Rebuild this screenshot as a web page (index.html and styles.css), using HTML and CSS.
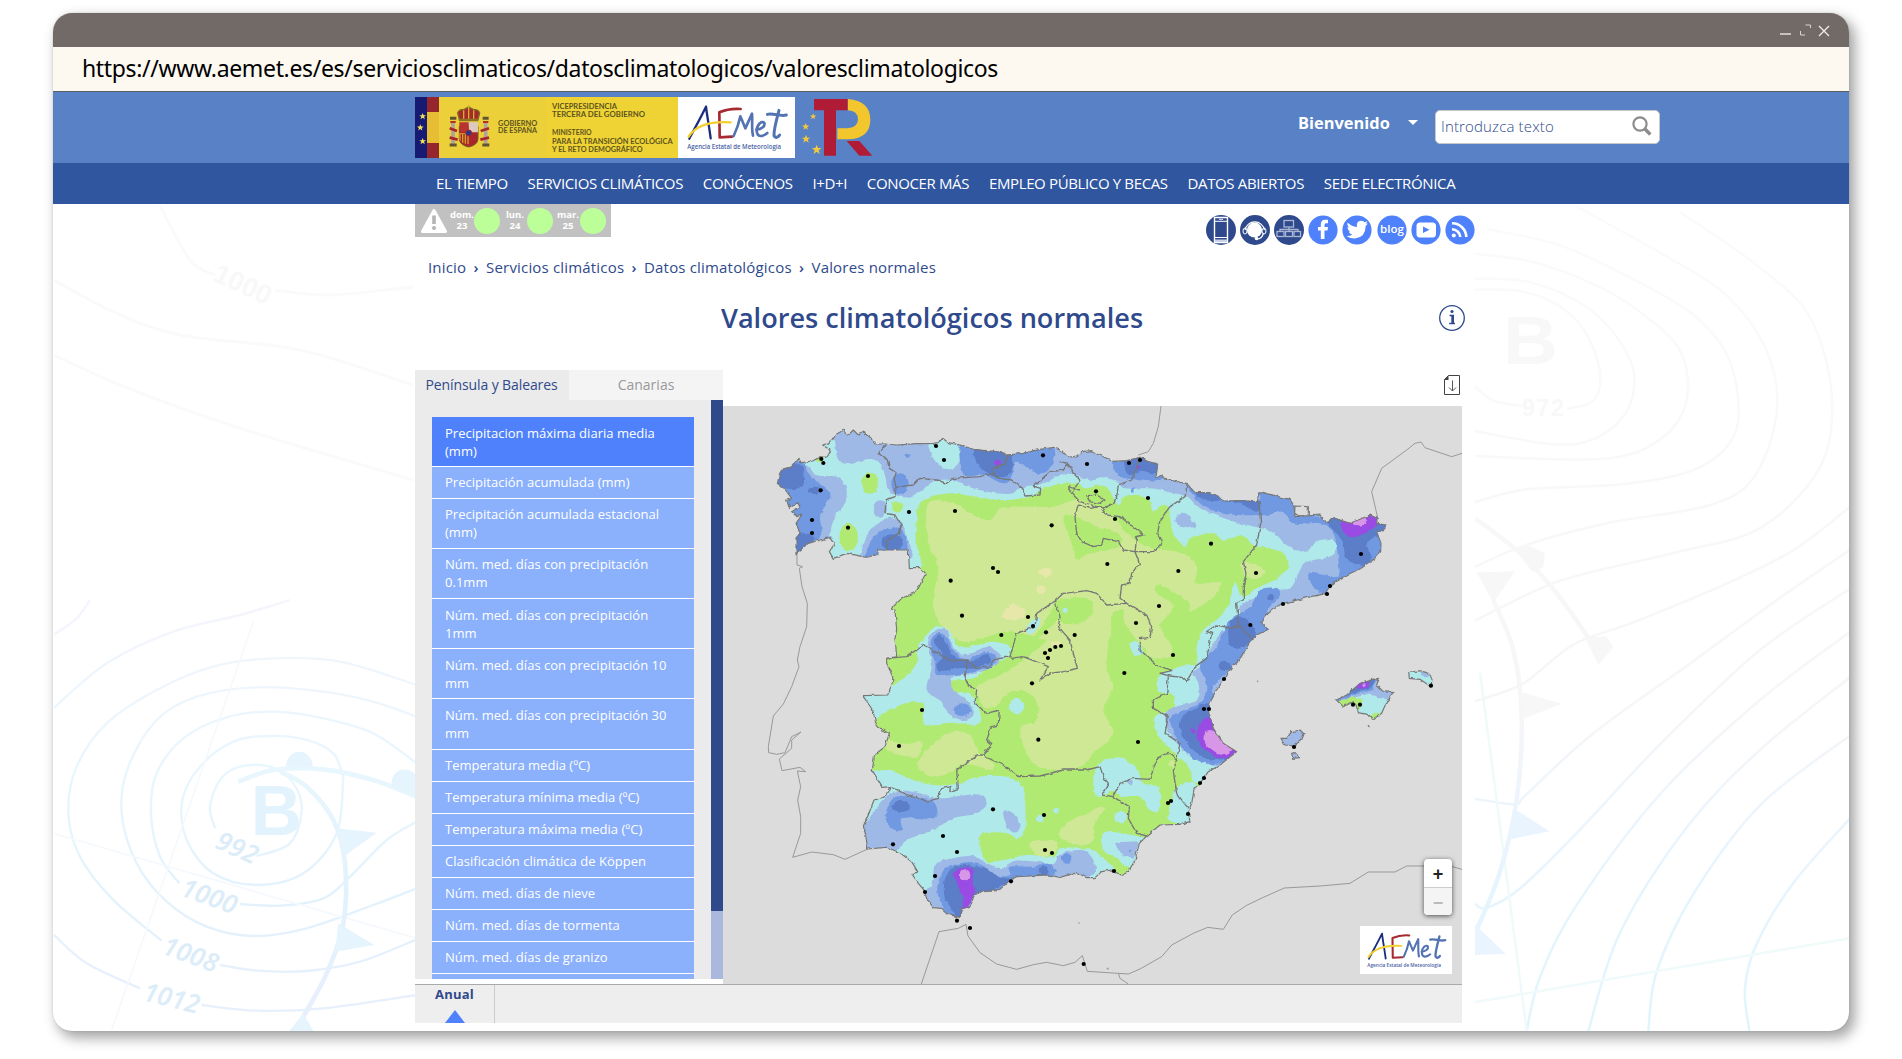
FILE: index.html
```html
<!DOCTYPE html>
<html lang="es">
<head>
<meta charset="utf-8">
<title>Valores climatológicos normales</title>
<link rel="stylesheet" href="styles.css">
</head>
<body>
<svg class="defs" width="0" height="0" aria-hidden="true">
  <symbol id="aemet" viewBox="0 0 351 183">
    <rect width="351" height="183" fill="#fff"/>
    <g fill="none" stroke-linecap="round" stroke-linejoin="round">
      <path d="M34 125C48 98 68 62 84 29C88 62 94 92 98 124" stroke="#1d2d7d" stroke-width="7"/>
      <path d="M124 46L125 120M124 46C145 37 165 34 188 36M125 121L162 119" stroke="#a62a31" stroke-width="8"/>
      <path d="M32 119C50 90 90 72 158 76" stroke="#f2cf2c" stroke-width="7"/>
      <path d="M167 117C176 98 183 78 187 58L202 94L222 50C224 75 220 95 225 116" stroke="#5473b2" stroke-width="8"/>
      <path d="M235 98C250 97 262 88 259 78C252 69 236 83 236 101C237 122 254 120 268 108" stroke="#5473b2" stroke-width="8"/>
      <path d="M303 40C296 66 287 98 288 116C292 126 302 119 305 114M268 52C285 46 305 60 325 54" stroke="#5473b2" stroke-width="9"/>
    </g>
    <text x="28" y="157" class="aemet-text" textLength="281" lengthAdjust="spacingAndGlyphs">Agencia Estatal de Meteorología</text>
  </symbol>
  <symbol id="star" viewBox="-12 -12 24 24"><path d="M0-11L3-3.500L11-3.500L4.500 1.500L7 9.500L0 4.500L-7 9.500L-4.500 1.500L-11-3.500L-3-3.500Z"/></symbol>
</svg>

<div class="window">
  <div class="titlebar">
    <svg width="52" height="16" viewBox="0 0 52 16" fill="none">
      <path d="M1 12H12" stroke="#c6c1be" stroke-width="2"/>
      <path d="M26.500 3H31.500V6M21.500 9V13H26" stroke="#d8d4d2"/>
      <path d="M40 4L50 14M50 4L40 14" stroke="#efedec" stroke-width="1.300"/>
    </svg>
  </div>
  <div class="urlbar"><span>https://www.aemet.es/es/serviciosclimaticos/datosclimatologicos/valoresclimatologicos</span></div>

  <header class="header">
    <svg class="gov" width="263" height="61" viewBox="0 0 789 183">
      <rect width="789" height="183" fill="#efd334"/>
      <rect x="72" width="324" height="183" fill="#ebd03a"/>
      <rect width="36" height="183" fill="#171a73"/>
      <rect x="36" width="36" height="183" fill="#96262d"/>
      <rect x="36" y="45" width="36" height="93" fill="#e6bd33"/>
      <g fill="#f5e05c"><use href="#star" x="12" y="47" width="22" height="22"/><use href="#star" x="5" y="81" width="22" height="22"/><use href="#star" x="12" y="122" width="22" height="22"/></g>
      <g>
        <path d="M133 88H189V126Q188 144 161 150Q134 144 133 126Z" fill="#a8262c" stroke="#735a20" stroke-width="3"/>
        <path d="M161 76H189V106H161Z" fill="#ddc9bd"/><path d="M133 76H161V106H133Z" fill="#b8332f"/>
        <path d="M133 108H161V142Q138 140 133 126Z" fill="#d79b2b"/><path d="M139 110V136M147 110V141M155 110V144" stroke="#a8262c" stroke-width="4"/>
        <circle cx="161" cy="108" r="9" fill="#253a86" stroke="#a8262c" stroke-width="3"/>
        <path d="M133 68L128 48Q132 36 146 38L161 30L176 38Q190 36 194 48L189 68Z" fill="#a52a2a" stroke="#806c25" stroke-width="4"/>
        <path d="M161 24V68M146 40V68M176 40V68" stroke="#d4ad2c" stroke-width="4"/>
        <path d="M132 69H190" stroke="#8c7324" stroke-width="8"/>
        <path d="M114 75V140M212 75V140" stroke="#afa49b" stroke-width="11"/>
        <path d="M105 64H124M203 64H221M104 144H125M202 144H223" stroke="#5f5533" stroke-width="9"/>
        <path d="M104 94L126 102M104 122L128 128M222 94L197 102M222 122L196 128" stroke="#a8262c" stroke-width="8"/>
        <path d="M106 75H122M204 75H220" stroke="#b0302c" stroke-width="6"/>
      </g>
      <g class="gov-text">
        <text x="249" y="86" textLength="118" lengthAdjust="spacingAndGlyphs">GOBIERNO</text>
        <text x="249" y="108" textLength="117" lengthAdjust="spacingAndGlyphs">DE ESPAÑA</text>
        <text x="411" y="35" textLength="195" lengthAdjust="spacingAndGlyphs">VICEPRESIDENCIA</text>
        <text x="411" y="60" textLength="279" lengthAdjust="spacingAndGlyphs">TERCERA DEL GOBIERNO</text>
        <text x="411" y="115" textLength="119" lengthAdjust="spacingAndGlyphs">MINISTERIO</text>
        <text x="411" y="141" textLength="362" lengthAdjust="spacingAndGlyphs">PARA LA TRANSICIÓN ECOLÓGICA</text>
        <text x="411" y="166" textLength="272" lengthAdjust="spacingAndGlyphs">Y EL RETO DEMOGRÁFICO</text>
      </g>
    </svg>
    <svg class="aemet-logo" width="117" height="61"><use href="#aemet"/></svg>
    <svg class="tr-logo" width="80" height="61" viewBox="0 0 240 183">
      <path d="M155 6Q223 12 223 68Q223 125 155 127H124V94H152Q186 92 186 67Q186 42 155 40Z" fill="#f4c62d"/>
      <path d="M54 6H155V40H120V176H84V40H54Z" fill="#b01c36"/>
      <path d="M152 132H190L229 176H190Z" fill="#b01c36"/>
      <g fill="#f2c93a"><use href="#star" x="41" y="48" width="21" height="21"/><use href="#star" x="17" y="77" width="24" height="24"/><use href="#star" x="16" y="112" width="28" height="28"/><use href="#star" x="46" y="142" width="32" height="32"/></g>
    </svg>
    <div class="welcome">Bienvenido<i class="caret"></i></div>
    <div class="search"><span>Introduzca texto</span>
      <svg width="20" height="20" viewBox="0 0 20 20" fill="none" stroke="#8c8c8c"><circle cx="8" cy="8" r="6.600" stroke-width="2.200"/><path d="M12.500 12.500L18.300 18.500" stroke-width="3.400"/></svg>
    </div>
  </header>

  <nav class="nav">
    <a>EL TIEMPO</a><a>SERVICIOS CLIMÁTICOS</a><a>CONÓCENOS</a><a>I+D+I</a><a>CONOCER MÁS</a><a>EMPLEO PÚBLICO Y BECAS</a><a>DATOS ABIERTOS</a><a>SEDE ELECTRÓNICA</a>
  </nav>

  <div class="content">
    <svg class="isobars" viewBox="54 204 1795 827" fill="none">
      <defs><linearGradient id="fadeL" gradientUnits="userSpaceOnUse" x1="0" y1="0" x2="0" y2="1290"><stop offset="0" stop-color="#f5f5fc"/><stop offset=".4" stop-color="#e8f6fd"/><stop offset=".7" stop-color="#e2f2fc"/><stop offset="1" stop-color="#e9effc"/></linearGradient>
      <linearGradient id="fadeR" gradientUnits="userSpaceOnUse" x1="0" y1="0" x2="0" y2="1500"><stop offset="0" stop-color="#fbfbfb"/><stop offset=".62" stop-color="#f6f6f7"/><stop offset=".8" stop-color="#e8f4fe"/><stop offset="1" stop-color="#e0f5fb"/></linearGradient></defs>
      <g transform="translate(40 600) scale(.33333)" stroke="url(#fadeL)" stroke-width="7">
        <path data-open="40,105 110,55 150,0"/>
        <path data-open="40,325 200,190 400,95 600,45 750,0"/>
        <path data-open="365,1022 220,900 120,770 85,640 110,500 200,370 350,270 520,200 700,175 900,185 1130,255"/>
        <path data-open="1130,865 1000,915 800,985 640,1008 500,980 380,905 290,790 245,640 265,500 350,360 470,290 650,262 850,275 1000,305 1130,350"/>
        <path data-open="418,850 360,770 333,640 350,520 430,415 560,352 700,335 850,355 1000,400 1130,490"/>
        <path data-open="1130,665 1040,720 930,830 850,895 720,917 600,912"/>
        <path data-open="910,530 880,460 800,420 690,408 580,425 480,500 427,600 440,720 520,820 650,855 790,820 890,700 910,530"/>
        <path data-open="525,685 510,620 540,540 600,500 690,500 760,550 785,630 750,730 650,768"/>
        <path data-open="540,1095 650,1112 800,1113 960,1085 1130,1018"/>
        <path data-open="40,1003 140,1090 300,1165"/>
        <path data-open="485,1215 650,1232 850,1225 1130,1185"/>
        <path d="M640 65L215 1290M40 700L1130 1015" stroke="#f5f9fd" stroke-width="5"/>
        <path data-open="595,545 700,510 850,508 1000,540 1130,590" stroke-width="14"/>
        <path data-open="720,515 800,560 880,660 915,790 910,970 860,1120 790,1250" stroke-width="14"/>
        <path d="M738 500A40 45 0 0 1 818 500ZM1055 555A40 40 0 0 1 1130 530V590ZM890 685L1010 698L910 770ZM895 970L1003 1035L885 1055ZM790 1240L820 1293H748Z" fill="#e6f4fd" stroke="none"/>
        <g class="iso-label"><text transform="translate(522 742) rotate(24)">992</text><text transform="translate(418 885) rotate(20)">1000</text><text transform="translate(362 1060) rotate(20)">1008</text><text transform="translate(305 1200) rotate(14)">1012</text><text class="low" x="632" y="706">B</text></g>
      </g>
      <g transform="translate(1460 190) scale(.33333 .55432)" stroke="url(#fadeR)">
        <g class="thin">
        <path data-open="45,180 180,182 300,210 380,260 420,330 400,380 320,395"/><path data-open="45,355 100,380 185,390"/>
        <path data-open="45,160 200,165 350,200 450,250 520,325 500,400 400,450 270,458 45,435"/>
        <path data-open="45,115 220,130 400,170 540,220 660,290 680,380 600,450 430,485 45,480"/>
        <path data-open="80,70 300,100 500,155 700,225 810,310 830,430 720,500 500,530 200,540 45,563"/>
        <path data-open="350,30 620,120 800,190 920,290 950,400 880,520 740,570 450,600 200,640 45,680"/>
        <path data-open="660,40 900,140 1050,230 1115,370 1080,500 900,610 640,655 300,705 45,777"/>
        <path data-open="1168,573 1000,650 800,710 520,780 340,820 190,890 45,922"/>
        <path data-open="1168,650 950,740 700,850 400,980 200,1090 165,1108 45,1098"/>
        <path data-open="1168,720 900,830 600,1000 350,1160 180,1260 80,1295 45,1288"/>
        <path data-open="1168,798 900,920 600,1090 350,1290 240,1420 200,1517"/>
        <path data-open="1168,880 900,1010 680,1150 480,1340 385,1517"/>
        <path data-open="1168,985 900,1110 700,1270 590,1410 565,1517"/>
        <path data-open="1168,1135 1000,1250 890,1360 855,1440 868,1517"/>
        <path d="M45 1465L1168 1350M60 870L200 1517" stroke="#f1fafa"/>
        </g>
        <g class="thick"><path data-open="45,592 180,655 300,735 420,840"/><path data-open="100,740 160,830 185,950 170,1100 120,1230 50,1335"/></g>
        <path d="M165 650L200 640L255 655L250 680L220 690ZM375 808L440 805L460 825L415 857ZM50 690L165 688L100 745ZM180 905L305 927L188 955Z" fill="#f7f7f7" stroke="none"/>
        <path d="M160 1115L268 1157L145 1172ZM45 1325L137 1378L45 1380Z" fill="#eaf4fe" stroke="none"/>
      </g>
      <g class="faint-label"><text transform="translate(1503 364) scale(1.120 1)" font-size="68">B</text><text x="1522" y="416" font-size="23" textLength="42">972</text><text transform="translate(212 280) rotate(25)" font-size="27">1000</text></g>
      <g stroke="#fafafb" stroke-width="3"><path data-open="160,206 190,260 215,275"/><path data-open="275,290 330,295 413,287"/><path data-open="54,280 110,310 180,335 300,350 413,385"/><path data-open="54,355 120,385 230,425 413,480"/></g>
    </svg>

    <main class="page">
      <div class="top-row">
        <div class="alerts">
          <svg width="26" height="24" viewBox="0 0 26 24"><path d="M13 1.500L24.500 22.500H1.500Z" fill="#fff" stroke="#fff" stroke-width="3" stroke-linejoin="round"/><path d="M13 6.500V15" stroke="#b5b5b5" stroke-width="3.600"/><circle cx="13" cy="19" r="2" fill="#b5b5b5"/></svg>
          <span>dom.<br>23</span><i></i><span>lun.<br>24</span><i></i><span>mar.<br>25</span><i></i>
        </div>
        <div class="social">
          <svg viewBox="0 0 30 30"><circle cx="15" cy="15" r="15" fill="#2f4a8c"/><path d="M8.500 2.500H21.500V27.500H8.500Z" fill="#2f4a8c" stroke="#fff" stroke-width="1.400"/><path d="M9 6.300H21M9 22.500H21" stroke="#fff"/><path d="M9 24.500H21V27H9ZM13 3.800H17V5H13Z" fill="#c9d2e8"/></svg>
          <svg viewBox="0 0 30 30"><circle cx="15" cy="15" r="15" fill="#2f4a8c"/><circle cx="14.500" cy="15" r="7.600" fill="#fff"/><path d="M5 15A10 10.500 0 0 1 24.500 15M23.500 18Q22 24 17 24" fill="none" stroke="#fff" stroke-width="1.200"/><ellipse cx="5" cy="16" rx="2" ry="3" fill="none" stroke="#fff"/><ellipse cx="24" cy="16" rx="2" ry="3" fill="none" stroke="#fff"/><circle cx="16.500" cy="23.500" r="1.800" fill="#fff"/></svg>
          <svg viewBox="0 0 30 30"><circle cx="15" cy="15" r="15" fill="#2f4a8c"/><g fill="none" stroke="#a9b6d6" stroke-width="1.300"><rect x="10" y="5.500" width="9.500" height="6.500"/><path d="M15 12V17M6 16.500V14.500H24V16.500"/><rect x="3" y="16.500" width="7" height="5"/><rect x="11.500" y="16.500" width="7" height="5"/><rect x="20" y="16.500" width="6.500" height="5"/></g></svg>
          <svg viewBox="0 0 30 30"><circle cx="15" cy="15" r="14.600" fill="#4e81fb"/><path d="M12.800 24V15.500H10V12H12.800V9.500Q12.800 4.800 17 4.800H20V8.300H18Q16.500 8.300 16.500 10V12H20L19.500 15.500H16.500V24Z" fill="#fff"/></svg>
          <svg viewBox="0 0 30 30"><circle cx="15" cy="15" r="14.600" fill="#4e81fb"/><path d="M5.500 7.500Q9.500 11.500 15 12Q14 6 19 5.800Q21.500 5.800 22.500 7.200L25.500 6.200L24 8.700L26 8.500L23.700 11Q23.500 22.500 13 23.500Q8 23.600 4.500 21Q8 21.200 10.200 19.400Q7.500 19 6.700 16.500H8.300Q5.500 15 5.300 12L7 12.400Q4.500 10 5.500 7.500Z" fill="#fff"/></svg>
          <svg viewBox="0 0 30 30"><circle cx="15" cy="15" r="14.600" fill="#4e81fb"/><text x="3" y="18" class="blog" textLength="24" lengthAdjust="spacingAndGlyphs">blog</text></svg>
          <svg viewBox="0 0 30 30"><circle cx="15" cy="15" r="14.600" fill="#4e81fb"/><rect x="5.500" y="7.500" width="19.500" height="15" rx="3.500" fill="#fff"/><path d="M12 11.500L18.500 14.800L12 18Z" fill="#4e81fb"/></svg>
          <svg viewBox="0 0 30 30"><circle cx="15" cy="15" r="14.600" fill="#4e81fb"/><circle cx="8.800" cy="20.500" r="2" fill="#fff"/><path d="M7 14.200A8.300 8.300 0 0 1 15.300 22M7 8.300A14 14 0 0 1 21.300 22" fill="none" stroke="#fff" stroke-width="2.600"/></svg>
        </div>
      </div>

      <div class="crumbs"><a>Inicio</a><b>›</b><a>Servicios climáticos</a><b>›</b><a>Datos climatológicos</a><b>›</b><a>Valores normales</a></div>

      <div class="title-row"><h1>Valores climatológicos normales</h1>
        <svg width="26" height="26" viewBox="0 0 26 26"><circle cx="13" cy="13" r="12.300" fill="none" stroke="#2f4a8c" stroke-width="1.300"/><circle cx="13" cy="6.500" r="1.600" fill="#2f4a8c"/><path d="M10.500 10.500H14.300V18M10.200 18.500H16" fill="none" stroke="#2f4a8c" stroke-width="1.400"/><path d="M13.400 10.500V18.500" stroke="#2f4a8c" stroke-width="2.200"/></svg>
      </div>

      <div class="viewer">
        <aside class="side">
          <div class="tabs"><span class="tab active">Península y Baleares</span><span class="tab">Canarias</span></div>
          <div class="panel">
            <ul class="list">
              <li class="sel">Precipitacion máxima diaria media (mm)</li>
              <li>Precipitación acumulada (mm)</li>
              <li>Precipitación acumulada estacional (mm)</li>
              <li>Núm. med. días con precipitación 0.1mm</li>
              <li>Núm. med. días con precipitación 1mm</li>
              <li>Núm. med. días con precipitación 10 mm</li>
              <li>Núm. med. días con precipitación 30 mm</li>
              <li>Temperatura media (ºC)</li>
              <li>Temperatura mínima media (ºC)</li>
              <li>Temperatura máxima media (ºC)</li>
              <li>Clasificación climática de Köppen</li>
              <li>Núm. med. días de nieve</li>
              <li>Núm. med. días de tormenta</li>
              <li>Núm. med. días de granizo</li>
              <li></li>
            </ul>
            <div class="scroll"><div class="thumb"></div></div>
          </div>
        </aside>
        <div class="map-col">
          <div class="map-tools"><svg width="16" height="20" viewBox="0 0 16 20" fill="none"><path d="M4.500 .5H15.500V19.500H.5V4.500Z" stroke="#444"/><path d="M.5 5V4.500L4.500 .5V5Z" fill="#444"/><path d="M8.500 5.500V16M5 12.500L8.500 16L12 12.500" stroke="#555"/></svg></div>
          <div class="map">
            <svg class="spain" viewBox="9 18 2217 1734" fill="none">
              <defs>
                <filter id="rough" filterUnits="userSpaceOnUse" x="0" y="0" width="2240" height="1760"><feTurbulence type="fractalNoise" baseFrequency=".06" numOctaves="2" seed="4" result="n"/><feDisplacementMap in="SourceGraphic" in2="n" scale="11" xChannelSelector="R" yChannelSelector="G"/></filter>
                <path id="land" d="M228 465V420L240 400L228 370L245 345L230 350L215 335L240 320L232 308L208 325L200 300L215 295L195 268L172 250L175 235L185 208L215 200L237 175L243 188L278 183L300 170L318 172L330 150L308 135L330 128L345 105L375 88L382 108L400 90L415 105L430 95L452 110L465 132L497 132L530 135L590 131L640 130L655 128L668 115L685 128L735 138L760 148L830 155L860 165L910 160L960 148L1000 142L1025 152L1045 172L1070 168L1085 155L1115 152L1145 168L1180 184L1220 182L1260 172L1285 185L1313 192L1310 215L1308 235L1325 225L1335 238L1400 250L1425 278L1470 278L1495 290L1510 303L1560 302L1612 305L1617 275L1650 283L1710 298L1722 318L1725 350L1800 345L1820 368L1845 355L1890 370L1920 358L1950 345L1972 355L1970 370L1998 375L1990 392L1970 395L1983 430L1982 455L1960 480L1920 507L1880 525L1845 545L1825 570L1820 580L1760 593L1690 610L1665 622L1640 645L1622 668L1645 688L1610 705L1592 722L1570 760L1550 790L1535 800L1512 838L1490 870L1475 895L1465 930L1480 985L1510 1030L1550 1055L1500 1095L1465 1115L1440 1150L1423 1165L1415 1210L1405 1235L1410 1265L1380 1273L1320 1275L1280 1308L1258 1330L1245 1380L1225 1415L1200 1428L1175 1410L1145 1415L1125 1433H1100L1080 1423L1060 1420L1020 1432L985 1425L890 1430L870 1440L840 1468L790 1472L763 1485L750 1520L727 1530L720 1552L685 1543L665 1525L640 1523L620 1495L612 1470L595 1450L578 1425L593 1415L575 1385L540 1358L500 1342L443 1347L437 1305L430 1278L445 1245L462 1200L495 1190L510 1160L488 1162L475 1140L457 1112L463 1065L495 1040L508 1000L485 990L467 968L458 930L428 887L503 885L518 845L518 830L500 790V775L530 770L525 715L530 690L525 630L513 627L545 595L590 575L612 530L617 520L600 503H568L565 450H475L473 463L440 472L380 460L340 475L328 455L343 432L328 413L300 420L265 430L235 455Z"/>
                <path id="mallorca" d="M1849 900L1880 885L1920 850L1960 838L1978 835L1970 855L1990 875L2019 878L2000 905L1985 940L1958 958L1945 943L1915 938L1908 915L1900 905L1870 920Z"/>
                <path id="menorca" d="M2066 818L2100 812L2120 818L2136 835L2133 860L2100 838L2068 835Z"/>
                <path id="ibiza" d="M1683 1015L1700 1015L1715 995L1740 990L1752 1002L1745 1020L1720 1038L1695 1035ZM1715 1060L1725 1058L1740 1073L1718 1075Z"/>
                <clipPath id="landclip"><use href="#land"/></clipPath>
                <clipPath id="mclip"><use href="#mallorca"/></clipPath>
              </defs>
              <g stroke="#999" stroke-width="3">
                <path d="M231 465V495L248 500L238 505L246 560L262 610L260 680L240 740L232 780L237 800L215 860L190 912L160 948L145 1040L146 1058L170 1063L195 1058L215 1010L243 996L215 1020L215 1045L178 1077L186 1112L240 1102L257 1115L232 1113L242 1160L233 1200L242 1250V1300L218 1372L275 1356L340 1364L375 1378L443 1347"/>
                <path d="M1323 18L1315 80L1300 130L1285 155L1255 165"/>
                <path d="M1973 353L1955 275L1985 205L2060 150L2085 130L2103 126L2115 143L2195 170L2226 160"/>
                <path d="M604 1752L657 1595L715 1585L738 1573L744 1608L780 1658L830 1692L890 1708L940 1694L980 1687L1030 1697L1065 1687L1087 1667L1102 1714L1195 1720L1225 1722L1260 1707L1325 1670L1355 1635L1420 1600L1463 1582L1510 1588L1537 1545L1580 1516L1630 1492L1693 1464L1800 1458L1890 1450L1945 1416H2025L2060 1398H2190L2226 1408"/>
                <path d="M1195 1720L1200 1735L1225 1752"/><circle cx="1613" cy="844" r="1.500"/><circle cx="1077" cy="1569" r="1"/><circle cx="1163" cy="1706" r="2"/>
              </g>
              <g filter="url(#rough)">
              <g clip-path="url(#landclip)">
                <rect class="green" x="100" y="50" width="2000" height="1550"/>
                <path class="lime" data-closed="625,310 700,310 760,345 810,360 845,325 920,320 1000,320 1080,300 1180,350 1220,400 1280,440 1330,450 1390,460 1430,500 1430,550 1500,545 1480,590 1410,635 1405,605 1320,555 1310,580 1355,610 1350,640 1320,670 1330,700 1355,740 1350,770 1300,775 1270,745 1215,670 1210,630 1180,640 1170,700 1160,800 1180,860 1150,930 1180,1000 1120,1060 1080,1100 1000,1110 940,1090 905,1020 905,980 950,960 950,910 900,870 860,900 800,925 775,890 770,860 870,810 960,740 970,720 900,700 850,695 730,725 660,670 640,600 655,500 625,430"/>
                <path class="green" data-closed="1030,355 1070,350 1130,380 1195,400 1195,440 1110,460 1070,478 1060,440"/>
                <path class="green" data-closed="1005,605 1060,593 1110,600 1118,640 1080,668 1030,670 1005,640"/>
                <path class="green" data-closed="870,770 950,700 1010,610 1030,640 960,710 910,750"/>
                <path class="lime" data-closed="1568,485 1620,500 1635,520 1600,540 1570,515"/>
                <path class="lime" data-closed="595,1085 640,1030 700,995 750,1005 775,1055 820,1090 815,1110 760,1095 720,1095 690,1120 640,1130 605,1115"/>
                <path class="lime" data-closed="505,1020 560,1032 607,1025 590,1072 530,1062 497,1045"/>
                <path class="lime" data-closed="1018,1310 1040,1270 1100,1240 1155,1222 1125,1270 1120,1320 1080,1336"/>
                <path class="lime" data-closed="930,1328 1008,1325 1005,1355 960,1370"/>
                <path class="beige" data-closed="850,635 880,612 918,635 900,655 855,657"/><ellipse class="beige" cx="978" cy="517" rx="20" ry="14"/><ellipse class="beige" cx="963" cy="569" rx="14" ry="12"/><ellipse class="beige" cx="1010" cy="732" rx="15" ry="8"/>

                <path class="cyan" data-closed="100,50 2150,50 2150,700 1650,1130 1440,1150 1410,1105 1350,1045 1310,1000 1305,950 1355,930 1365,905 1350,880 1315,875 1315,830 1380,800 1430,790 1430,740 1450,690 1500,650 1530,600 1545,550 1570,590 1620,560 1680,530 1705,495 1680,455 1600,435 1570,405 1510,420 1480,400 1410,415 1395,440 1360,400 1350,350 1345,318 1320,318 1300,335 1285,295 1250,285 1210,292 1195,315 1165,270 1140,255 1100,265 1075,252 1030,250 975,265 930,290 850,300 760,290 700,280 640,288 600,310 590,350 590,430 600,510 500,520 150,520"/>
                <path class="peri" data-closed="345,60 2150,50 2150,600 1650,1110 1500,1100 1420,1075 1370,1030 1340,980 1345,930 1430,900 1435,850 1420,820 1450,790 1475,740 1500,700 1555,655 1560,620 1610,590 1650,568 1710,565 1740,510 1760,485 1835,468 1848,430 1825,418 1790,425 1755,455 1700,435 1655,395 1560,370 1500,350 1440,325 1400,290 1340,275 1290,265 1215,265 1190,245 1145,232 1110,240 1050,222 1020,225 970,250 905,262 880,280 830,280 760,265 700,240 640,245 600,275 560,292 525,285 505,270 490,210 465,180 430,180 390,192 355,180 345,120"/>
                <path class="cyan" data-closed="625,110 700,125 722,170 700,205 672,203 640,175"/>
                <path class="peri" data-closed="100,180 240,185 290,225 350,230 378,260 375,310 345,350 330,400 330,430 220,500 100,450"/>
                <path class="blue" data-closed="100,180 240,185 262,215 285,240 330,280 320,310 300,350 300,410 220,500 100,450"/>
                <path class="dark" data-closed="100,205 237,195 250,225 245,260 185,262"/><ellipse class="dark" cx="285" cy="271" rx="20" ry="11"/><path class="dark" data-closed="210,410 270,402 280,425 230,480"/>
                <path class="peri" data-closed="428,490 440,410 475,370 510,350 545,370 560,410 570,480"/><ellipse class="peri" cx="480" cy="327" rx="21" ry="26"/>
                <path class="blue" data-closed="445,480 455,420 495,390 545,390 557,470"/><ellipse class="dark" cx="517" cy="428" rx="33" ry="25"/>
                <ellipse class="blue" cx="540" cy="252" rx="26" ry="32"/><circle class="blue" cx="563" cy="167" r="6"/>
                <ellipse class="green" cx="450" cy="250" rx="24" ry="32"/><ellipse class="green" cx="386" cy="412" rx="28" ry="42"/><ellipse class="green" cx="533" cy="321" rx="17" ry="17"/><ellipse class="green" cx="300" cy="176" rx="14" ry="10"/>
                <path class="blue" data-closed="735,120 900,140 1000,145 990,205 950,220 890,185 875,230 850,250 790,225 730,222"/>
                <path class="dark" data-closed="770,140 870,160 870,220 830,230 775,195"/><ellipse class="purple" cx="833" cy="188" rx="11" ry="9"/>
                <path class="blue" data-closed="1185,180 1320,180 1320,240 1240,238 1195,225"/><path class="dark" data-closed="1225,170 1320,190 1305,220 1265,212 1230,225 1215,205"/><circle class="purple" cx="1253" cy="201" r="5"/><ellipse class="blue" cx="1239" cy="270" rx="5" ry="8"/>
                <path class="blue" data-closed="1400,240 1500,270 1615,300 1620,260 1750,290 1760,340 1830,350 2050,330 2020,480 1850,560 1820,580 1790,570 1768,520 1850,530 1855,480 1840,400 1800,370 1720,370 1690,335 1640,345 1560,345 1500,338 1440,310"/>
                <path class="dark" data-closed="1425,278 1470,275 1500,300 1455,300"/><path class="dark" data-closed="1515,300 1612,300 1612,335 1570,315"/>
                <path class="dark" data-closed="1815,355 1900,360 2020,360 1990,400 1940,430 1955,470 1930,497 1880,475 1865,420"/><ellipse class="blue" cx="1966" cy="440" rx="22" ry="28"/>
                <path class="purple" data-closed="1865,365 1920,345 1975,345 1970,375 1935,400 1890,412 1870,392"/><path class="pink" data-closed="1900,366 1925,352 1942,360 1930,374 1905,376"/>
                <path class="blue" data-closed="1765,520 1800,520 1850,540 1810,580 1780,560"/>
                <ellipse class="peri" cx="1390" cy="360" rx="24" ry="22"/><ellipse class="peri" cx="1412" cy="374" rx="17" ry="9"/>
                <path class="blue" data-closed="1480,860 1500,900 1470,940 1500,1030 1560,1060 1480,1092 1400,1060 1355,980 1360,945 1440,910 1462,860 1440,800 1460,770 1490,740 1530,660 1590,620 1620,570 1670,565 1678,590 1640,640 1680,690 1600,750"/>
                <ellipse class="dark" cx="1653" cy="592" rx="8" ry="10"/><path class="dark" data-closed="1530,665 1560,650 1600,680 1600,715 1560,745 1530,735 1525,700"/><ellipse class="dark" cx="1514" cy="798" rx="18" ry="15"/>
                <path class="dark" data-closed="1470,915 1500,1030 1570,1060 1480,1080 1420,1050 1385,1000 1385,955 1430,925"/>
                <path class="purple" data-closed="1445,960 1475,955 1485,985 1510,1020 1570,1050 1500,1075 1455,1045 1430,1010"/><path class="pink" data-closed="1455,1000 1470,990 1490,1000 1515,1030 1540,1045 1505,1065 1455,1030"/><ellipse class="purple" cx="1420" cy="992" rx="6" ry="9"/>

                <path class="cyan" data-closed="530,850 590,790 590,745 625,700 650,678 690,695 715,740 770,735 820,725 870,740 860,775 810,795 770,830 730,840 690,845 690,880 750,880 778,930 775,972 690,968 612,975 612,920 600,905 560,908 500,935 440,965 400,880"/>
                <path class="peri" data-closed="625,730 640,695 680,690 700,740 740,765 800,740 840,760 835,790 770,820 700,830 700,870 740,900 762,940 735,960 690,945 665,905 620,870 635,800"/>
                <path class="blue" data-closed="632,730 650,700 680,710 700,750 740,778 790,755 825,765 820,795 780,812 700,825 650,825 645,790"/>
                <path class="dark" data-closed="642,725 658,705 680,730 700,765 750,785 800,762 812,785 775,800 720,805 660,812 650,790 668,770"/>
                <ellipse class="blue" cx="727" cy="929" rx="26" ry="19"/>
                <ellipse class="green" cx="895" cy="910" rx="54" ry="36"/><ellipse class="cyan" cx="890" cy="918" rx="23" ry="22"/>
                <path class="cyan" data-closed="917,690 935,662 960,655 955,680 930,703"/><circle class="cyan" cx="1036" cy="631" r="8"/><path class="cyan" data-closed="1230,732 1255,730 1270,760 1245,765"/>

                <path class="cyan" data-closed="400,1150 500,1110 550,1130 640,1155 720,1150 780,1130 860,1130 905,1155 915,1200 915,1290 890,1315 860,1300 790,1300 780,1330 800,1385 860,1378 920,1365 1000,1370 1020,1345 1080,1345 1140,1365 1135,1450 560,1600 400,1400"/>
                <path class="peri" data-closed="400,1320 440,1265 500,1190 540,1172 600,1180 660,1195 770,1183 800,1210 770,1240 700,1255 640,1290 560,1320 530,1350 430,1360"/>
                <path class="blue" data-closed="497,1250 520,1195 580,1190 640,1205 650,1250 600,1258 545,1255 545,1290 515,1285"/><ellipse class="dark" cx="543" cy="1219" rx="26" ry="17"/>
                <path class="peri" data-closed="850,1235 880,1240 900,1280 885,1298 862,1280"/>
                <path class="cyan" data-closed="950,1250 970,1248 965,1266 950,1264"/><circle class="cyan" cx="1008" cy="1232" r="8"/>
                <path class="peri" data-closed="620,1500 635,1450 650,1390 700,1375 760,1368 800,1390 850,1405 880,1383 950,1385 1000,1392 1025,1360 1100,1355 1108,1430 850,1480 720,1600"/>
                <path class="blue" data-closed="655,1490 665,1420 700,1395 770,1388 830,1425 870,1425 870,1400 940,1400 985,1392 1000,1425 870,1460 760,1490 720,1580"/>
                <path class="dark" data-closed="672,1480 680,1425 720,1395 790,1405 840,1430 870,1440 800,1480 760,1490 725,1560 690,1520"/><ellipse class="blue" cx="1040" cy="1375" rx="14" ry="16"/><ellipse class="dark" cx="972" cy="1412" rx="14" ry="14"/>
                <path class="purple" data-closed="702,1430 712,1410 740,1402 762,1410 758,1450 765,1470 740,1530 725,1530 728,1490"/><ellipse class="pink" cx="735" cy="1426" rx="16" ry="18"/>
                <path class="cyan" data-closed="1120,1165 1130,1100 1170,1075 1215,1078 1255,1115 1270,1150 1315,1160 1320,1225 1290,1232 1260,1190 1210,1190 1180,1175 1140,1190"/>
                <path class="cyan" data-closed="1345,1250 1370,1165 1430,1155 1420,1290 1370,1270"/><path class="cyan" data-closed="1150,1300 1185,1297 1260,1310 1270,1320 1230,1400 1190,1375 1150,1350"/><ellipse class="cyan" cx="1202" cy="1250" rx="19" ry="17"/>
                <path class="peri" data-closed="1188,1330 1230,1325 1255,1330 1240,1375 1205,1360"/><circle class="blue" cx="1231" cy="1353" r="4"/><ellipse class="peri" cx="1229" cy="1147" rx="9" ry="6"/>
                <ellipse class="lime" cx="1355" cy="1090" rx="8" ry="10"/>
              </g>
              <use href="#mallorca" fill="#afe9e9"/>
              <g clip-path="url(#mclip)"><path class="peri" d="M1840 905L1900 895L1950 880L1980 895L2030 900V830H1850Z"/><path class="blue" d="M1840 905L1900 885L1960 870V830H1880Z"/><path class="dark" d="M1880 885L1950 865L1975 835H1900Z"/><path class="purple" d="M1905 860L1925 845L1950 838L1945 860L1920 868Z"/><circle class="pink" cx="1932" cy="855" r="5"/><path class="green" d="M1850 905L1900 890L1925 900L1912 940L1860 930ZM1950 945L1985 935L1965 965Z"/></g>
              <use href="#menorca" fill="#afe9e9"/><path class="peri" d="M2100 813L2120 818L2128 832L2105 830Z"/>
              <use href="#ibiza" fill="#9fb9e6"/>
              <g stroke="#777" stroke-width="3.500" stroke-linejoin="round">
                <use href="#land"/><use href="#mallorca"/><use href="#menorca"/><use href="#ibiza"/>
                <path d="M1941 975L1947 985" />
                <path fill="#dcdcdc" d="M1725 318L1765 320L1765 342L1740 350L1724 340Z"/>
                <g stroke-width="4">
                <path d="M497 132L478 162L502 180L508 205L528 218L522 235L528 262L525 290L498 300L495 340L525 345L543 375L535 400L500 425L500 448"/>
                <path d="M528 262L580 255L600 235L650 240L680 250L700 235L780 230L820 220L835 235L875 240L905 262L915 288L960 285L962 265L940 258L990 215L1030 210L1045 190L1020 185M865 165L850 195L820 205L820 220"/>
                <path d="M1045 190L1060 220L1080 240L1055 280L1045 262M1045 260L1080 270M1055 280L1080 305L1150 325L1180 310L1190 290L1195 255L1235 240L1250 200L1255 180M1100 290L1130 285L1155 300L1140 310L1110 305Z"/>
                <path d="M1075 315L1065 350L1070 400L1085 425L1120 440L1145 435L1150 415L1195 425L1210 450L1245 455L1250 410L1272 405L1200 350L1160 345L1140 320L1110 325L1075 315"/>
                <path d="M1402 250L1395 290L1350 320L1320 360L1313 400L1325 430L1300 455L1245 455L1258 490L1235 520L1230 550L1205 555L1200 595L1220 610L1280 645L1295 680L1290 712L1262 715L1260 750L1310 795L1355 812L1320 820L1350 828L1385 832L1400 845L1425 800L1460 775L1475 700L1460 695L1490 675L1535 685L1560 678L1600 720"/>
                <path d="M1617 305L1622 370L1610 435L1570 485L1578 520L1570 560L1570 600L1550 610L1555 675"/>
                <path d="M1220 610L1160 615L1130 580L1100 572L1030 580L1005 603L950 640L945 680L890 700L870 770L820 780L810 800L770 805L740 780L690 782L660 765L640 750L610 735L560 770L500 775"/>
                <path d="M1005 603L1020 650L1015 680L1050 720L1060 760L1072 805L1030 815L990 820L960 840L985 800L910 770L870 775"/>
                <path d="M740 780L735 840L750 860L770 870L765 910L800 940L838 930L835 975L815 980L800 1020L815 1030L790 1065L770 1065L710 1110L715 1165L690 1175L690 1160L665 1165L655 1195L620 1205L590 1190L560 1185L545 1175L510 1160"/>
                <path d="M790 1068L850 1095L895 1130L960 1128L1030 1110L1100 1110L1140 1100L1150 1130L1165 1150L1145 1185L1178 1190L1200 1150L1240 1135L1290 1138L1310 1075L1345 1057L1370 1078L1380 1030L1335 1000L1345 950L1300 925L1300 900L1340 880L1345 830"/>
                <path d="M1178 1190L1228 1220L1225 1255L1250 1300L1280 1308M1370 1078L1360 1115L1370 1180L1405 1225"/>
                </g>
              </g>
              </g>
              <g class="dots" data-dots="304,177 310,189 444,228 302,271 276,360 276,399 384,383 567,336 648,138 672,180 705,333 969,166 1101,192 1128,274 1185,357 995,376 819,504 834,516 692,542 726,647 844,705 924,651 939,678 978,697 1064,705 1023,738 1006,741 990,750 975,759 984,774 936,850 1162,492 1227,189 1260,180 1284,294 1473,431 1375,513 1317,618 1248,669 1359,765 1213,819 1608,519 1923,462 1830,558 1821,582 1689,612 1591,675 1512,837 2133,857 606,930 537,1038 955,1019 819,1228 972,1245 669,1308 711,1356 519,1333 645,1428 615,1476 873,1444 975,1350 996,1359 1182,1413 711,1562 750,1584 1091,1692 1452,927 1467,927 1254,1026 1452,1134 1440,1149 1344,1209 1353,1203 1404,1242 1722,1041 1899,914 1920,914"></g>
            </svg>
            <div class="zoomctl"><span>+</span><span class="off">−</span></div>
            <svg class="map-logo" width="92" height="48"><use href="#aemet"/></svg>
          </div>
        </div>
      </div>
      <div class="timeline"><div class="period"><span>Anual</span><i></i></div></div>
    </main>
  </div>
</div>
<script src="map.js"></script>
</body>
</html>
```
FILE: styles.css
```css
* { box-sizing: border-box; }
body { margin: 0; height: 1059px; padding: 13px 0 0 53px; background: #fff; font-family: "Open Sans", "Noto Sans", sans-serif; }
.defs { position: absolute; }
svg { display: block; flex: none; }

.window { width: 1796px; height: 1018px; border-radius: 19px; overflow: hidden; background: #fff; box-shadow: 5px 6px 13px 1px rgba(0,0,0,.36), 0 0 2px rgba(0,0,0,.15); display: flex; flex-direction: column; }
.titlebar { height: 34px; background: #726a67; display: flex; align-items: center; justify-content: flex-end; padding-right: 18px; }
.urlbar { height: 45px; background: #fdf9f1; border-bottom: 1px solid #5b5e62; padding-left: 29px; line-height: 43px; font-family: "Noto Sans", sans-serif; font-size: 23px; letter-spacing: -.34px; color: #000; white-space: nowrap; }

.header { height: 71px; background: #5882c5; display: flex; padding: 5px 0 0 362px; }
.gov-text { font-family: Lato, sans-serif; font-size: 23px; font-weight: 700; fill: #5d541f; }
.aemet-text { font-family: "Open Sans", sans-serif; font-size: 21px; font-weight: 600; fill: #4a62a5; }
.tr-logo { margin-left: 1px; }
.welcome { margin-left: 422px; width: 137px; color: #fff; font-weight: 700; font-size: 16.400px; line-height: 51px; white-space: nowrap; }
.caret { display: inline-block; margin-left: 18px; vertical-align: 4px; border: 5.5px solid transparent; border-top: 5px solid #fff; border-bottom: 0; }
.search { width: 225px; height: 34px; margin-top: 13px; background: #fff; border: 1px solid #c9c9c9; border-radius: 5px; display: flex; align-items: center; justify-content: space-between; padding: 0 7px 2px 5px; font-size: 15px; font-weight: 300; letter-spacing: .15px; color: #2f4a8c; }

.nav { height: 41px; background: #2f569f; padding-left: 383px; display: flex; gap: 19.800px; color: #fff; font-size: 15px; font-weight: 400; letter-spacing: -.36px; line-height: 41px; white-space: nowrap; }

.content { position: relative; height: 827px; padding-left: 362px; }
.isobars { position: absolute; left: 1px; top: 0; width: 1795px; height: 827px; }
.isobars .thin { stroke-width: 2.500px; }
.isobars .thick { stroke-width: 4.500px; }
.isobars .thin path, .isobars .thick path { vector-effect: non-scaling-stroke; }
.iso-label { fill: #dcedf9; stroke: none; font-family: "Noto Sans", sans-serif; font-weight: 600; font-style: italic; font-size: 78px; }
.iso-label .low { font-family: "Liberation Sans", sans-serif; font-weight: 700; font-style: normal; font-size: 212px; fill: #e3f3fd; }
.faint-label { fill: #f8f8f8; font-family: "Liberation Sans", sans-serif; font-weight: 700; }

.page { position: relative; width: 1060px; height: 827px; background: #fff; }
.top-row { display: flex; justify-content: space-between; height: 45px; }
.alerts { width: 196px; height: 33px; background: #c1c1c1; display: flex; align-items: center; padding-left: 6px; }
.alerts span { width: 27px; padding-left: 3px; text-align: center; color: #fff; font-weight: 700; font-size: 9.500px; line-height: 10.500px; }
.alerts i { width: 26px; height: 26px; border-radius: 50%; background: #bcff99; }
.social { display: flex; gap: 4.200px; padding-top: 11px; }
.social svg { width: 30px; height: 30px; }
.blog { font-family: "Open Sans", sans-serif; font-weight: 600; font-size: 11px; fill: #fff; }

.crumbs { height: 37px; padding: 0 0 2px 13px; display: flex; gap: 7.300px; align-items: center; color: #2f4a8c; font-size: 15px; letter-spacing: .18px; white-space: nowrap; }
.crumbs b { font-weight: 600; }
.title-row { display: flex; height: 84px; padding: 18px 10px 0 306px; justify-content: space-between; }
.title-row h1 { margin: 0; font-size: 27.120px; font-weight: 600; line-height: 27px; color: #2f4a8c; white-space: nowrap; }
.title-row svg { margin-top: 1px; }

.viewer { display: flex; height: 614px; }
.side { width: 308px; }
.tabs { display: flex; height: 30px; }
.tab { width: 154px; text-align: center; background: #f4f4f4; color: #999; font-size: 14px; line-height: 30px; white-space: nowrap; }
.tab.active { background: #ebebeb; color: #2f4a8c; padding-right: 1px; letter-spacing: -.1px; }
.panel { height: 579px; background: #ebebeb; display: flex; overflow: hidden; }
.list { list-style: none; margin: 17px 17px 0 17px; padding: 0; width: 262px; }
.list li { background: #8bb0fc; border-bottom: 1px solid #fff; padding: 6.300px 12px 6.800px 13px; min-height: 32px; font-size: 13px; font-weight: 500; line-height: 18px; letter-spacing: .02px; color: #fff; }
.list .sel { background: #4e81fb; padding-top: 6.500px; padding-bottom: 6.500px; }
.scroll { width: 12px; background: #abb8dd; }
.thumb { height: 511px; background: #30498a; }

.map-col { width: 739px; }
.map-tools { height: 36px; display: flex; justify-content: flex-end; padding: 5px 2px 0 0; }
.map { position: relative; height: 578px; background: #dcdcdc; }
.spain { width: 739px; height: 578px; }
.green { fill: #b0ea72; } .lime { fill: #cee895; } .beige { fill: #e7e7aa; } .cyan { fill: #afe9e9; }
.peri { fill: #9fb9e6; } .blue { fill: #6f99e2; } .dark { fill: #5b7dc8; } .purple { fill: #994be3; } .pink { fill: #d896e6; }
.dots { fill: #000; }
.zoomctl { position: absolute; right: 10px; bottom: 69px; width: 28px; height: 56px; background: #fff; border-radius: 4px; box-shadow: 0 1px 5px rgba(0,0,0,.65); overflow: hidden; display: flex; flex-direction: column; font: bold 18px/30px "Liberation Sans", sans-serif; text-align: center; color: #222; }
.zoomctl span { height: 28px; }
.zoomctl .off { background: #f4f4f4; border-top: 1px solid #ccc; color: #bbb; }
.map-logo { position: absolute; right: 10px; bottom: 10px; }

.timeline { width: 1047px; height: 39px; margin-top: 0; background: #eee; border-top: 1px solid #aaa; }
.period { width: 80px; height: 38px; border-right: 1px solid #ccc; display: flex; flex-direction: column; align-items: center; overflow: hidden; font-size: 13px; font-weight: 700; line-height: 18px; letter-spacing: .2px; color: #2f4a8c; }
.period i { margin-top: 7px; border: 10px solid transparent; border-top: 0; border-bottom: 13px solid #4e81fb; }
```
FILE: map.js
```js
// Turns lists of control points into smooth curves (Catmull-Rom to Bézier).
function curve(points, closed) {
  const n = points.length;
  const at = i => closed ? points[(i + n) % n] : points[Math.max(0, Math.min(n - 1, i))];
  let d = `M${points[0].join(' ')}`;
  for (let i = 0; i < (closed ? n : n - 1); i++) {
    const [a, b, c, e] = [at(i - 1), at(i), at(i + 1), at(i + 2)];
    d += `C${b[0] + (c[0] - a[0]) / 6} ${b[1] + (c[1] - a[1]) / 6} ${c[0] - (e[0] - b[0]) / 6} ${c[1] - (e[1] - b[1]) / 6} ${c[0]} ${c[1]}`;
  }
  return closed ? d + 'Z' : d;
}
const parse = s => s.trim().split(/\s+/).map(p => p.split(',').map(Number));
document.querySelectorAll('[data-open]').forEach(p => p.setAttribute('d', curve(parse(p.dataset.open), false)));
document.querySelectorAll('[data-closed]').forEach(p => p.setAttribute('d', curve(parse(p.dataset.closed), true)));

// Weather stations.
document.querySelectorAll('[data-dots]').forEach(g => parse(g.dataset.dots).forEach(([x, y]) => {
  const c = document.createElementNS('http://www.w3.org/2000/svg', 'circle');
  c.setAttribute('cx', x); c.setAttribute('cy', y); c.setAttribute('r', 6.3);
  g.append(c);
}));
```
